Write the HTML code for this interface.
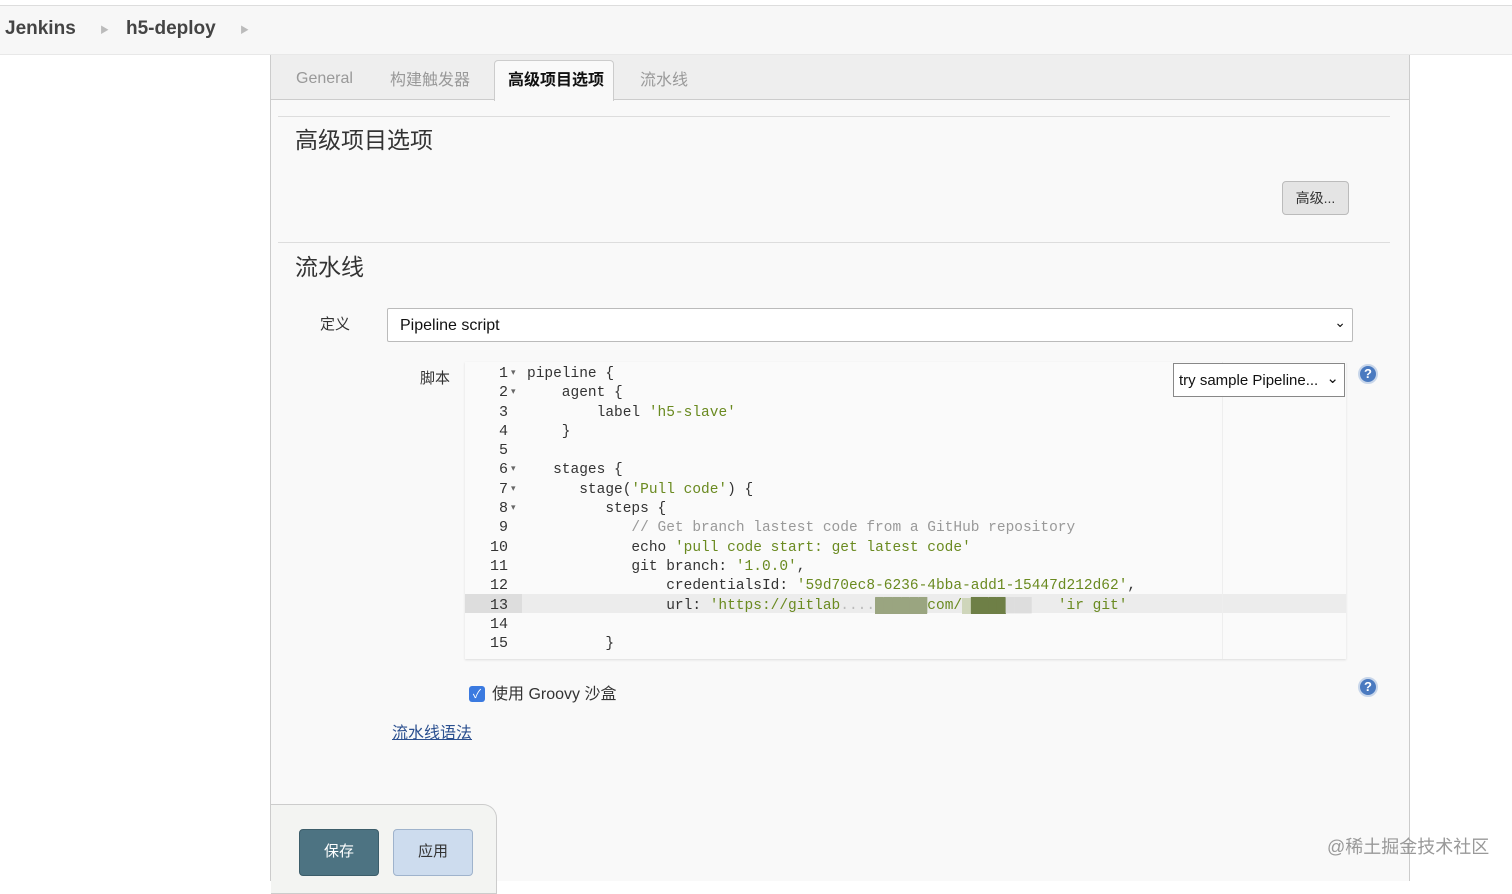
<!DOCTYPE html>
<html><head><meta charset="utf-8"><style>
*{box-sizing:border-box;margin:0;padding:0}
body{width:1512px;height:881px;background:#fff;font-family:"Liberation Sans","Noto Sans CJK SC",sans-serif;position:relative;overflow:hidden;color:#333}
.abs{position:absolute}
.hdr{left:0;top:5px;width:1512px;height:50px;background:#f7f7f7;border-top:1px solid #ddd;border-bottom:1px solid #e8e8e8}
.panel{left:270px;top:55px;width:1140px;height:826px;background:#f9f9f9;border-left:1px solid #ccc;border-right:1px solid #ccc}
.tabs{left:271px;top:55px;width:1138px;height:45px;background:#eee;border-bottom:1px solid #ccc}
.tab{top:70px;font-size:16px;color:#999}
.code{font-family:"Liberation Mono",monospace;font-size:14.5px;line-height:19.3px;white-space:pre;color:#333}
.s{color:#6a8a20}.c{color:#999}
.btn{border-radius:4px;font-size:15px;text-align:center;line-height:44px}
.help{width:20px;height:20px;border-radius:50%;background:#4a7ac0;border:2px solid #c8d6ea;color:#fff;font-size:13px;font-weight:bold;text-align:center;line-height:16px}
</style></head><body>
<div class="abs hdr"></div>
<div class="abs" style="left:5px;top:18px;font-size:19px;font-weight:bold;color:#444">Jenkins</div>
<div class="abs" style="left:100px;top:23px;font-size:9px;color:#bbb">▶</div>
<div class="abs" style="left:126px;top:18px;font-size:19px;font-weight:bold;color:#444">h5-deploy</div>
<div class="abs" style="left:240px;top:23px;font-size:9px;color:#bbb">▶</div>
<div class="abs panel"></div>
<div class="abs tabs"></div>
<div class="abs tab" style="left:296px;top:70px">General</div>
<div class="abs tab" style="left:390px;top:66px">构建触发器</div>
<div class="abs" style="left:494px;top:60px;width:120px;height:41px;background:#f9f9f9;border:1px solid #ccc;border-bottom:none;border-radius:4px 4px 0 0"></div>
<div class="abs" style="left:508px;top:66px;font-size:16px;font-weight:bold;color:#111">高级项目选项</div>
<div class="abs tab" style="left:640px;top:66px">流水线</div>
<div class="abs" style="left:278px;top:116px;width:1112px;height:1px;background:#ddd"></div>
<div class="abs" style="left:295px;top:121px;font-size:23px;color:#333">高级项目选项</div>
<div class="abs btn" style="left:1282px;top:181px;width:67px;height:34px;line-height:32px;background:#e4e4e4;border:1px solid #bbb;font-size:14px">高级...</div>
<div class="abs" style="left:278px;top:242px;width:1112px;height:1px;background:#ddd"></div>
<div class="abs" style="left:295px;top:248px;font-size:23px;color:#333">流水线</div>
<div class="abs" style="left:320px;top:313px;font-size:15px">定义</div>
<div class="abs" style="left:387px;top:308px;width:966px;height:34px;background:#fff;border:1px solid #bbb;border-radius:2px;font-size:16px;padding:8px 12px;color:#111">Pipeline script<span style="position:absolute;right:6px;top:5px;font-size:14px">⌄</span></div>
<div class="abs" style="left:420px;top:367px;font-size:15px">脚本</div>
<div class="abs" style="left:465px;top:362px;width:881px;height:297px;background:#fafafa;box-shadow:0 1px 2px #ddd"></div>
<div class="abs" style="left:465px;top:594px;width:881px;height:19px;background:#ececec"></div>
<div class="abs" style="left:465px;top:594px;width:57px;height:19px;background:#ddd"></div>
<div class="abs" style="left:1222px;top:362px;width:1px;height:297px;background:#eee"></div>
<div class="abs code" style="left:474px;top:364px;width:34px;text-align:right;color:#333;font-size:15px">1
2
3
4
5
6
7
8
9
10
11
12
13
14
15</div>
<div class="abs code" style="left:511px;top:364px;font-size:9px;color:#666">▾
▾



▾
▾
▾</div>
<div class="abs code" style="left:527px;top:365px">pipeline {
    agent {
        label <span class="s">'h5-slave'</span>
    }

   stages {
      stage(<span class="s">'Pull code'</span>) {
         steps {
            <span class="c">// Get branch lastest code from a GitHub repository</span>
            echo <span class="s">'pull code start: get latest code'</span>
            git branch: <span class="s">'1.0.0'</span>,
                credentialsId: <span class="s">'59d70ec8-6236-4bba-add1-15447d212d62'</span>,
                url: <span class="s">'https://gitlab</span><span style="color:#bbb">....</span><span style="background:#9aa580;color:#9aa580">██████</span><span class="s">com/</span><span style="background:#cfd6bb;color:#cfd6bb">_</span><span style="background:#6e7f46;color:#6e7f46">████</span><span style="color:#ddd">███</span>   <span class="s">'ir git'</span>

         }</div>
<div class="abs" style="left:1173px;top:363px;width:172px;height:34px;background:#fff;border:1px solid #888;font-size:15px;padding:8px 5px;color:#111">try sample Pipeline...<span style="position:absolute;right:5px;top:5px">⌄</span></div>
<div class="abs help" style="left:1358px;top:364px">?</div>
<div class="abs" style="left:469px;top:686px;width:16px;height:16px;border-radius:3px;background:#3b7ae0;color:#fff;font-size:12px;text-align:center;line-height:16px">✓</div>
<div class="abs" style="left:492px;top:680px;font-size:16px">使用 Groovy 沙盒</div>
<div class="abs help" style="left:1358px;top:677px">?</div>
<div class="abs" style="left:392px;top:719px;font-size:16px;color:#2a4f8f;text-decoration:underline">流水线语法</div>
<div class="abs" style="left:271px;top:804px;width:226px;height:90px;background:#f3f4f2;border:1px solid #ccc;border-left:none;border-radius:0 14px 0 0"></div>
<div class="abs btn" style="left:299px;top:829px;width:80px;height:47px;background:#4d7382;border:1px solid #3c5d6a;color:#fff">保存</div>
<div class="abs btn" style="left:393px;top:829px;width:80px;height:47px;background:#cddcee;border:1px solid #9fb3cc;color:#333">应用</div>
<div class="abs" style="left:1327px;top:833px;font-size:18px;color:#999">@稀土掘金技术社区</div>
</body></html>
